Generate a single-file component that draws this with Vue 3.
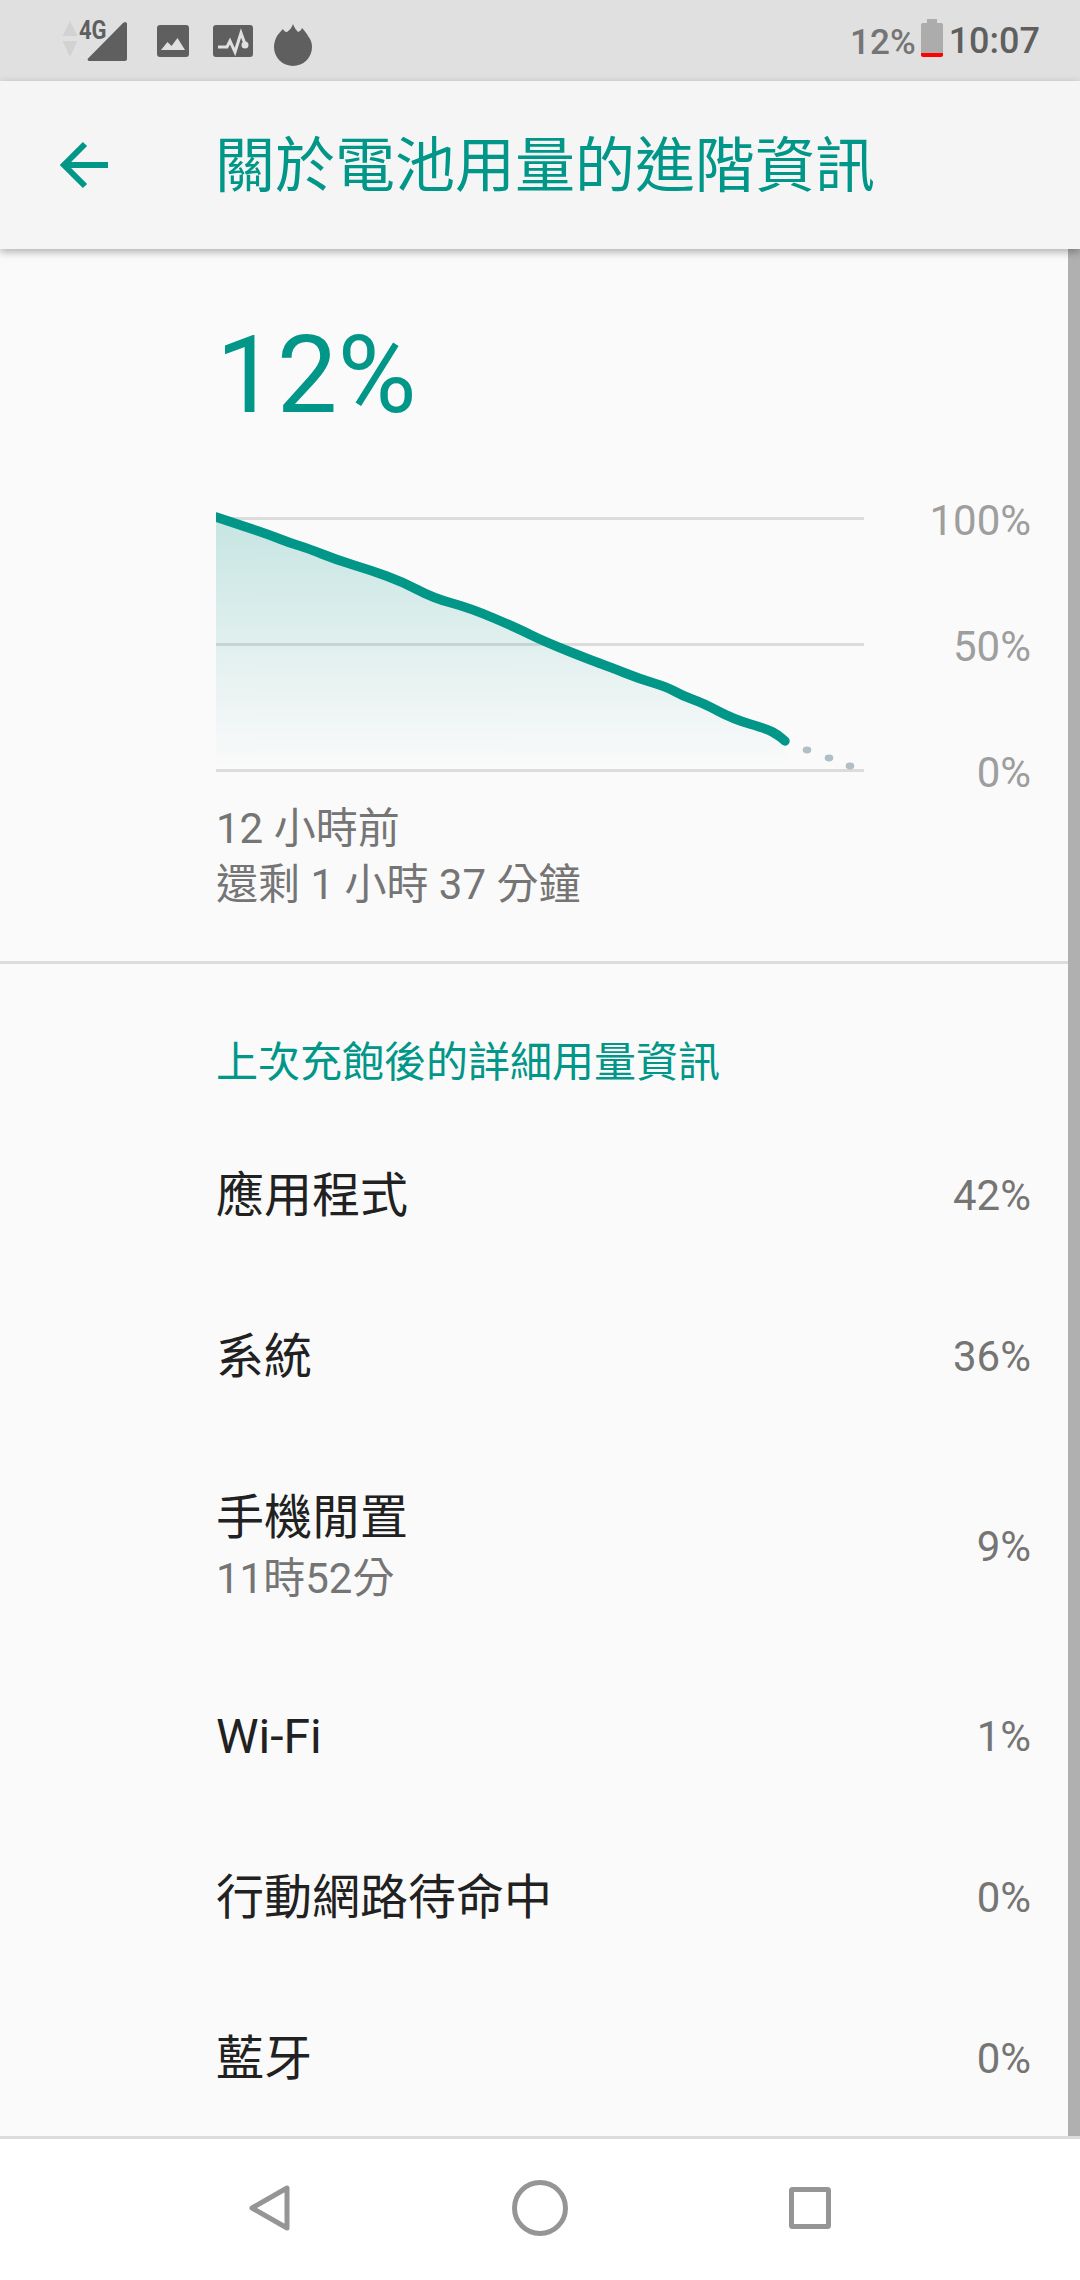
<template>
  <div class="screen">
    <div class="status-bar">
      <div class="signal">
        <svg class="updown" width="16" height="36" viewBox="0 0 16 36">
          <path d="M8 0l7.500 15H.5z" fill="#d2d2d2" />
          <path d="M.5 20h15L8 36z" fill="#d2d2d2" />
        </svg>
        <span class="net">4G</span>
        <svg class="bars" width="42" height="42" viewBox="0 0 42 42">
          <path d="M39 2a2 2 0 0 1 2 1.500V39a2 2 0 0 1-2 2H3a1.500 1.500 0 0 1-1-2.500L37 3z" fill="#5f5f5f" />
        </svg>
      </div>
      <svg class="icon-image" width="32" height="32" viewBox="0 0 32 32">
        <rect width="32" height="32" rx="3" fill="#5f5f5f" />
        <path d="M4 25l6.500-8 4 4 6-8L28 25z" fill="#e0e0e0" />
      </svg>
      <svg class="icon-pulse" width="40" height="32" viewBox="0 0 40 32">
        <rect width="40" height="32" rx="3" fill="#5f5f5f" />
        <path d="M5 22h9l3-6 5 11 6-19 4 11" fill="none" stroke="#e0e0e0" stroke-width="3" />
        <circle cx="32" cy="20" r="3.500" fill="#e0e0e0" />
      </svg>
      <svg class="icon-flame" width="38" height="42" viewBox="0 0 38 42">
        <path d="M19 0C20 3 22 6 24 8C26 7 27.500 6 28 4C31 7 33 10 34 12C37 16 38 19 38 23A19 19 0 0 1 0 23C0 19 1 16 3 12C5 9 7 7 9 5C10 7 11 8 13 8C16 6 18 3 19 0Z" fill="#5f5f5f" />
      </svg>
      <div class="status-right">
        <span class="status-pct">12%</span>
        <svg class="battery" width="22" height="38" viewBox="0 0 22 38">
          <path d="M6 0h10v4h4a2 2 0 0 1 2 2v28H0V6a2 2 0 0 1 2-2h4z" fill="#acacac" />
          <path d="M0 34h22v2a2 2 0 0 1-2 2H2a2 2 0 0 1-2-2z" fill="#f00" />
        </svg>
        <span class="clock">10:07</span>
      </div>
    </div>

    <header class="toolbar">
      <svg class="back" width="48" height="48" viewBox="0 0 48 48">
        <path d="M48 24H4M25 3L4 24l21 21" fill="none" stroke="#009688" stroke-width="6" />
      </svg>
      <h1 class="title">關於電池用量的進階資訊</h1>
    </header>

    <main class="content">
      <section class="battery-block">
        <div class="big-pct">12%</div>
        <div class="chart">
          <svg class="chart-svg" width="648" height="284" viewBox="216 500 648 284">
            <defs>
              <linearGradient id="area" x1="0" y1="0" x2="0" y2="1">
                <stop offset="0" stop-color="#009688" stop-opacity="0.21" />
                <stop offset="1" stop-color="#009688" stop-opacity="0" />
              </linearGradient>
            </defs>
            <rect v-for="y in gridLines" :key="y" x="216" :y="y" width="648" height="3" fill="#dcdcdc" />
            <path :d="areaPath" fill="url(#area)" />
            <path :d="linePath" fill="none" stroke="#009688" stroke-width="9.500" stroke-linecap="round" stroke-linejoin="round" />
            <ellipse v-for="d in dots" :key="d[0]" :cx="d[0]" :cy="d[1]" rx="4.300" ry="3.400" fill="#b0bec5" />
          </svg>
          <div class="chart-labels">
            <span>100%</span>
            <span>50%</span>
            <span>0%</span>
          </div>
        </div>
        <div class="summary">
          <div>12 小時前</div>
          <div>還剩 1 小時 37 分鐘</div>
        </div>
      </section>

      <section class="usage">
        <h2 class="usage-head">上次充飽後的詳細用量資訊</h2>
        <div v-for="row in rows" :key="row.name" class="row" :class="{ tall: row.sub }">
          <div class="row-text">
            <div class="row-name">{{ row.name }}</div>
            <div v-if="row.sub" class="row-sub">{{ row.sub }}</div>
          </div>
          <div class="row-pct">{{ row.pct }}</div>
        </div>
      </section>

      <div class="scrollbar"></div>
    </main>

    <nav class="nav-bar">
      <svg width="42" height="48" viewBox="0 0 42 48">
        <path d="M38 4v40L3 24z" fill="none" stroke="#959595" stroke-width="5" stroke-linejoin="round" />
      </svg>
      <svg width="56" height="56" viewBox="0 0 56 56">
        <circle cx="28" cy="28" r="25.500" fill="none" stroke="#959595" stroke-width="5" />
      </svg>
      <svg width="42" height="42" viewBox="0 0 42 42">
        <rect x="2.500" y="2.500" width="37" height="37" rx="1" fill="none" stroke="#959595" stroke-width="5" />
      </svg>
    </nav>
  </div>
</template>

<script setup>
const gridLines = [517, 643, 769];

const points = [
  [216, 517], [243, 526], [270, 535], [290, 543], [307, 548], [337, 560], [370, 570],
  [403, 582], [433, 598], [470, 608], [517, 628], [543, 641], [593, 661], [610, 667],
  [640, 679], [667, 687], [683, 696], [703, 703], [733, 719], [767, 729], [778, 735], [785, 741],
];

const dots = [[807, 750], [829, 758], [850, 766]];

// smooth through the midpoints
const curve = () => {
  let d = `M${points[0][0]} ${points[0][1]}`;
  for (let i = 1; i < points.length - 1; i++) {
    const mx = (points[i][0] + points[i + 1][0]) / 2;
    const my = (points[i][1] + points[i + 1][1]) / 2;
    d += `Q${points[i][0]} ${points[i][1]} ${mx} ${my}`;
  }
  const last = points[points.length - 1];
  return `${d}L${last[0]} ${last[1]}`;
};

const linePath = curve();
const areaPath = `${linePath}L785 769L216 769Z`;

const rows = [
  { name: '應用程式', pct: '42%' },
  { name: '系統', pct: '36%' },
  { name: '手機閒置', sub: '11時52分', pct: '9%' },
  { name: 'Wi-Fi', pct: '1%' },
  { name: '行動網路待命中', pct: '0%' },
  { name: '藍牙', pct: '0%' },
];
</script>

<style>
html, body {
  margin: 0;
  background: #fafafa;
}
</style>

<style scoped>
.screen {
  width: 1080px;
  height: 2280px;
  display: flex;
  flex-direction: column;
  overflow: hidden;
  background: #fafafa;
  font-family: Roboto, "Noto Sans CJK TC", sans-serif;
}

.status-bar {
  height: 81px;
  flex: none;
  display: flex;
  align-items: center;
  padding-left: 62px;
  padding-right: 40px;
  box-sizing: border-box;
  background: #e0e0e0;
}

.signal {
  display: flex;
  align-items: flex-start;
  width: 95px;
  height: 44px;
  position: relative;
}

.updown {
  margin-top: 2px;
}

.net {
  position: absolute;
  left: 17px;
  top: -3px;
  font-size: 25px;
  line-height: 30px;
  font-weight: 700;
  color: #5f5f5f;
  transform: scaleX(0.88);
  transform-origin: left center;
}

.bars {
  position: absolute;
  left: 24px;
  top: 1px;
}

.icon-pulse {
  margin-left: 24px;
}

.icon-flame {
  margin-left: 21px;
  margin-top: 8px;
}

.status-right {
  margin-left: auto;
  display: flex;
  align-items: center;
}

.status-pct {
  font-size: 35px;
  font-weight: 500;
  color: #757575;
  margin-right: 5px;
  margin-top: 3px;
}

.battery {
  margin-top: -6px;
}

.clock {
  font-size: 36px;
  font-weight: 500;
  color: #5f5f5f;
  margin-left: 6px;
  margin-top: 1px;
}

.toolbar {
  height: 168px;
  flex: none;
  display: flex;
  align-items: center;
  padding-left: 60px;
  box-sizing: border-box;
  background: #f5f5f5;
  box-shadow: 0 3px 8px rgba(0, 0, 0, 0.3);
  position: relative;
  z-index: 2;
}

.title {
  margin: 4px 0 0 107px;
  font-size: 60px;
  font-weight: 400;
  line-height: 80px;
  color: #009688;
}

.content {
  flex: 1;
  min-height: 0;
  overflow: hidden;
  position: relative;
}

.battery-block {
  padding: 63px 0 48px 216px;
  border-bottom: 3px solid #dcdcdc;
}

.big-pct {
  font-size: 108px;
  line-height: 126px;
  color: #009688;
}

.chart {
  display: flex;
  margin-top: 62px;
  height: 280px;
}

.chart-svg {
  flex: none;
}

.chart-labels {
  flex: 1;
  margin-top: -4px;
  padding-right: 49px;
  height: 301px;
  display: flex;
  flex-direction: column;
  justify-content: space-between;
  align-items: flex-end;
  font-size: 42px;
  line-height: 49px;
  color: #9e9e9e;
}

.summary {
  margin-top: 21px;
  font-size: 42px;
  line-height: 56px;
  color: #757575;
}

.usage-head {
  margin: 0;
  padding: 69px 0 22px 216px;
  font-size: 42px;
  font-weight: 400;
  line-height: 60px;
  color: #009688;
}

.row {
  height: 161px;
  padding: 0 49px 0 216px;
  display: flex;
  align-items: center;
  justify-content: space-between;
}

.row.tall {
  height: 219px;
}

.row.tall .row-text {
  margin-top: 3px;
}

.row-name {
  font-size: 48px;
  line-height: 62px;
  color: #212121;
}

.row-sub {
  font-size: 42px;
  line-height: 60px;
  color: #757575;
}

.row-pct {
  font-size: 42px;
  color: #757575;
}

.scrollbar {
  position: absolute;
  top: 0;
  right: 0;
  bottom: 0;
  width: 12px;
  background: #b0b0b0;
}

.nav-bar {
  height: 144px;
  flex: none;
  box-sizing: border-box;
  border-top: 3px solid #dcdcdc;
  background: #fff;
  padding: 0 135px 3px;
  display: grid;
  grid-template-columns: repeat(3, 270px);
  justify-items: center;
  align-items: center;
}
</style>
